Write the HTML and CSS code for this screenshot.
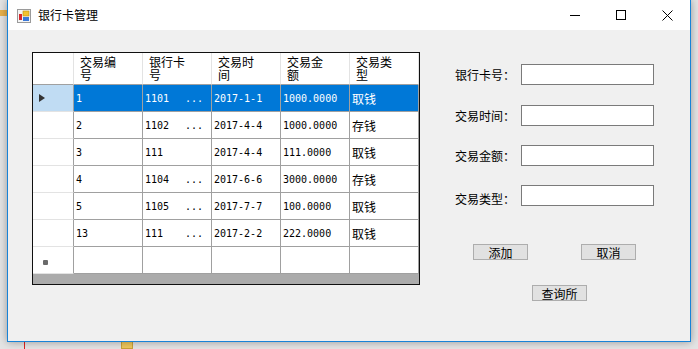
FILE: index.html
```html
<!DOCTYPE html>
<html lang="zh-CN">
<head>
  <meta charset="UTF-8">
  <title>银行卡管理</title>
  <meta name="viewport" content="width=device-width, initial-scale=1.0">
  <link rel="stylesheet" href="styles.css">
</head>
<body>
  <div class="desktop">
    <!-- 桌面背景上露出的东西 -->
    <span class="desk-strip"></span>
    <span class="desk-folder"></span>
    <span class="desk-red"></span>

    <div class="window">
      <!-- 标题栏 -->
      <div class="titlebar">
        <svg class="app-icon" width="14" height="14" viewBox="0 0 14 14">
          <rect x="0.5" y="0.5" width="13" height="13" fill="#f4f4f4" stroke="#9a9a9a"/>
          <rect x="2" y="5" width="3" height="6" fill="#d8262c"/>
          <rect x="6" y="2" width="6" height="5" fill="#f2c230" stroke="#c08a10" stroke-width="0.6"/>
          <rect x="6" y="8" width="6" height="4" fill="#3a78d8"/>
        </svg>
        <span class="title">银行卡管理</span>
        <div class="controls">
          <span class="ctl">
            <svg width="10" height="10" viewBox="0 0 10 10"><path d="M0 5.5H10" stroke="#000" stroke-width="1"/></svg>
          </span>
          <span class="ctl">
            <svg width="10" height="10" viewBox="0 0 10 10"><rect x="0.5" y="0.5" width="9" height="9" fill="none" stroke="#000" stroke-width="1"/></svg>
          </span>
          <span class="ctl">
            <svg width="11" height="11" viewBox="0 0 11 11"><path d="M0.5 0.5L10.5 10.5M10.5 0.5L0.5 10.5" stroke="#000" stroke-width="1"/></svg>
          </span>
        </div>
      </div>

      <!-- 窗体内容 -->
      <div class="client">
        <div class="grid">
          <div class="row head">
            <div class="rh"></div>
            <div class="cell">交易编<br>号</div>
            <div class="cell">银行卡<br>号</div>
            <div class="cell">交易时<br>间</div>
            <div class="cell">交易金<br>额</div>
            <div class="cell">交易类<br>型</div>
          </div>
          <div class="row selected">
            <div class="rh"><span class="arrow"></span></div>
            <div class="cell">1</div>
            <div class="cell">1101<span class="more">...</span></div>
            <div class="cell">2017-1-1</div>
            <div class="cell">1000.0000</div>
            <div class="cell cn">取钱</div>
          </div>
          <div class="row">
            <div class="rh"></div>
            <div class="cell">2</div>
            <div class="cell">1102<span class="more">...</span></div>
            <div class="cell">2017-4-4</div>
            <div class="cell">1000.0000</div>
            <div class="cell cn">存钱</div>
          </div>
          <div class="row">
            <div class="rh"></div>
            <div class="cell">3</div>
            <div class="cell">111</div>
            <div class="cell">2017-4-4</div>
            <div class="cell">111.0000</div>
            <div class="cell cn">取钱</div>
          </div>
          <div class="row">
            <div class="rh"></div>
            <div class="cell">4</div>
            <div class="cell">1104<span class="more">...</span></div>
            <div class="cell">2017-6-6</div>
            <div class="cell">3000.0000</div>
            <div class="cell cn">存钱</div>
          </div>
          <div class="row">
            <div class="rh"></div>
            <div class="cell">5</div>
            <div class="cell">1105<span class="more">...</span></div>
            <div class="cell">2017-7-7</div>
            <div class="cell">100.0000</div>
            <div class="cell cn">取钱</div>
          </div>
          <div class="row">
            <div class="rh"></div>
            <div class="cell">13</div>
            <div class="cell">111<span class="more">...</span></div>
            <div class="cell">2017-2-2</div>
            <div class="cell">222.0000</div>
            <div class="cell cn">取钱</div>
          </div>
          <div class="row">
            <div class="rh"><span class="newrow"></span></div>
            <div class="cell"></div>
            <div class="cell"></div>
            <div class="cell"></div>
            <div class="cell"></div>
            <div class="cell"></div>
          </div>
        </div>

        <div class="form">
          <div class="field first">
            <label>银行卡号：</label>
            <input type="text">
          </div>
          <div class="field">
            <label>交易时间：</label>
            <input type="text">
          </div>
          <div class="field">
            <label>交易金额：</label>
            <input type="text">
          </div>
          <div class="field last">
            <label>交易类型：</label>
            <input type="text">
          </div>
          <div class="buttons">
            <button>添加</button>
            <button class="cancel">取消</button>
          </div>
          <button class="query">查询所</button>
        </div>
      </div>
    </div>
  </div>
</body>
</html>
```

FILE: styles.css
```css
* { box-sizing: border-box; margin: 0; padding: 0; }
body {
  font-family: "Noto Sans CJK SC", "Noto Sans", sans-serif;
  font-size: 12px;
  color: #000;
  background: #d6d6d6;
  width: 698px;
  height: 349px;
  overflow: hidden;
}
.desktop {
  position: relative;
  width: 698px;
  height: 349px;
  background: #e4e4e4;
  overflow: hidden;
}
.desk-strip {
  position: absolute;
  left: 0;
  top: 10px;
  width: 7px;
  height: 6px;
  background: #e8b04a;
}
.desk-folder {
  position: absolute;
  left: 121px;
  top: 340px;
  width: 12px;
  height: 9px;
  background: #efc85c;
  border: 1px solid #c9a23a;
}
.desk-red {
  position: absolute;
  left: 24px;
  top: 342px;
  width: 1px;
  height: 7px;
  background: #e02020;
}
.window {
  position: relative;
  margin-left: 7px;
  width: 684px;
  height: 342px;
  border: 1px solid #1883d7;
  border-top: none;
  background: #f0f0f0;
  box-shadow: 0 0 8px rgba(0,0,0,0.35);
  display: flex;
  flex-direction: column;
}

/* 标题栏 */
.titlebar {
  height: 30px;
  background: #fff;
  display: flex;
  align-items: center;
  padding-left: 9px;
}
.app-icon {
  margin-top: 1px;
}
.title {
  margin-left: 7px;
  font-size: 12px;
  line-height: 14px;
}
.controls {
  margin-left: auto;
  display: flex;
  height: 30px;
}
.ctl {
  width: 46px;
  height: 30px;
  display: flex;
  align-items: center;
  justify-content: center;
}

/* 内容区 */
.client {
  flex: 1;
  display: flex;
  align-items: flex-start;
}
.grid {
  margin-left: 24px;
  margin-top: 22px;
  width: 388px;
  height: 233px;
  border: 1px solid #101010;
  background: #ababab;
}
.row {
  display: flex;
  height: 27px;
  background: #fff;
}
.row.head {
  height: 32px;
}
.rh {
  width: 41px;
  border-right: 1px solid #a0a0a0;
  border-bottom: 1px solid #e3e3e3;
  display: flex;
  align-items: center;
  padding-left: 6px;
}
.cell {
  width: 69px;
  border-right: 1px solid #a0a0a0;
  border-bottom: 1px solid #a0a0a0;
  display: flex;
  align-items: center;
  padding-left: 2px;
  font-family: "DejaVu Sans Mono", "Liberation Mono", monospace;
  font-size: 10px;
  white-space: nowrap;
}
.cell.cn {
  font-family: "Noto Sans CJK SC", sans-serif;
  font-size: 12px;
}
.more {
  margin-left: auto;
  padding-right: 8px;
}
.head .rh {
  border-right-color: #e3e3e3;
  border-bottom-color: #a0a0a0;
}
.head .cell {
  display: block;
  padding: 2px 0 0 6px;
  font-family: "Noto Sans CJK SC", sans-serif;
  font-size: 12px;
  line-height: 13px;
  border-right-color: #e3e3e3;
}
.selected .rh {
  background: #c0dcf3;
}
.selected .cell {
  background: #0078d7;
  color: #fff;
}
.arrow {
  width: 0;
  height: 0;
  border-top: 4px solid transparent;
  border-bottom: 4px solid transparent;
  border-left: 6px solid #333;
}
.newrow {
  margin-left: 4px;
  margin-top: 4px;
  width: 5px;
  height: 5px;
  border-radius: 1px;
  background: #6a6a6a;
}

/* 右侧表单 */
.form {
  margin-left: 35px;
  margin-top: 34px;
  display: flex;
  flex-direction: column;
}
.field {
  display: flex;
  align-items: center;
  height: 21px;
  margin-bottom: 19px;
}
.field.first {
  margin-bottom: 20px;
}
.field label {
  width: 66px;
  font-size: 12px;
  line-height: 14px;
}
.field.last label {
  padding-top: 7px;
}
.field input {
  width: 133px;
  height: 21px;
  border: 1px solid #7a7a7a;
  background: #fff;
  outline: none;
}
.buttons {
  display: flex;
  padding-left: 18px;
  margin-top: 19px;
}
button {
  width: 55px;
  height: 16px;
  background: #e1e1e1;
  border: 1px solid #adadad;
  font-family: "Noto Sans CJK SC", sans-serif;
  font-size: 12px;
  line-height: 13px;
  color: #000;
}
.buttons .cancel {
  margin-left: 53px;
}
.query {
  margin-top: 25px;
  margin-left: 77px;
}
```
